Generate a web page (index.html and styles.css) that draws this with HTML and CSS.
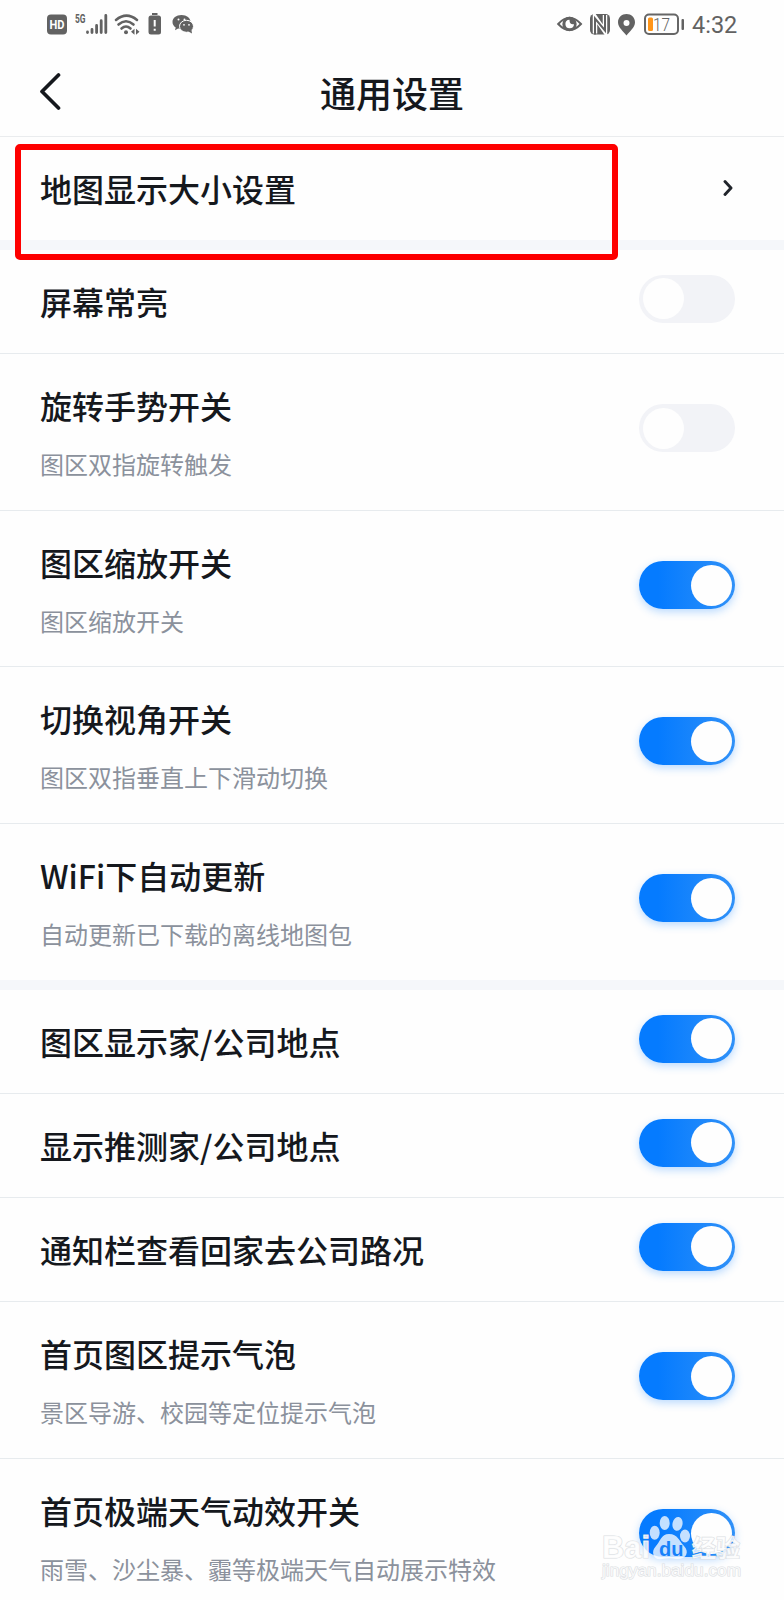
FILE: index.html
```html
<!DOCTYPE html>
<html lang="zh-CN">
<head>
<meta charset="utf-8">
<title>通用设置</title>
<link rel="stylesheet" href="styles.css">
</head>
<body>
<div class="screen">
  <div class="status">
    <svg class="status-icons" width="150" height="30" viewBox="0 0 150 30" fill="#626262">
      <rect x="0" y="5.500" width="20" height="20" rx="4"/>
      <text x="10" y="20" class="hd" textLength="15" lengthAdjust="spacingAndGlyphs">HD</text>
      <text x="28" y="14" class="fiveg" textLength="10.500" lengthAdjust="spacingAndGlyphs">5G</text>
      <g stroke="#626262" stroke-width="2.8" stroke-linecap="round">
        <path d="M40.500 23v.5M45 20.500v3M49.600 16.500v7M54.200 11.700v11.800M58.800 6.400v17.100"/>
      </g>
      <g fill="none" stroke="#626262" stroke-width="2.600" stroke-linecap="round">
        <path d="M69 10.900q10.500-8.600 21 0M71.500 15.500q7.500-6.500 15 0M74.500 19.500q4.500-4 9 0"/>
      </g>
      <circle cx="79" cy="23.200" r="2"/>
      <path d="M87.500 19.700v6l-3.500-3zM89 19.700v6l3.500-3z"/>
      <rect x="105" y="4" width="5.500" height="2"/>
      <rect x="101.500" y="6.500" width="12.500" height="19" rx="2.500"/>
      <path d="M107.700 11v6.500M107.700 19.800v2" stroke="#fff" stroke-width="2"/>
      <path d="M134.500 6c-5.200 0-9 3.100-9 7 0 2.300 1.200 4.200 3.200 5.500l-.7 2.700 3.100-1.600c1 .3 2 .4 3.400.4 5.200 0 9-3.100 9-7s-3.800-7-9-7z"/>
      <ellipse cx="139.500" cy="17.300" rx="7" ry="6" stroke="#fff" stroke-width="1"/>
      <path d="M141 22.200l4 2.300-.6-3.800z"/>
      <g fill="#fff"><circle cx="131.500" cy="10.500" r="1"/><circle cx="137.500" cy="10.500" r="1"/><circle cx="137" cy="15.800" r=".9"/><circle cx="142" cy="15.800" r=".9"/></g>
    </svg>
    <div class="status-right">
      <svg width="130" height="30" viewBox="0 0 130 30" fill="#626262">
        <path d="M2.200 15Q13.500 2.500 25 15Q13.500 27 2.200 15z" fill="none" stroke="#626262" stroke-width="2"/>
        <circle cx="13.500" cy="15" r="7.200"/>
        <path d="M13.500 10.700a4.300 4.300 0 1 0 4.500 4.500q-4.500.8-4.500-4.500z" fill="#fff"/>
        <rect x="34" y="5" width="20" height="20.500" rx="4.500"/>
        <path d="M39 24.500V8L49 22.500V6" fill="none" stroke="#fff" stroke-width="4.500"/>
        <path d="M39 25.500V9.500L49 21.500V5" fill="none" stroke="#626262" stroke-width="2"/>
        <path d="M70.500 5c-4.700 0-8.500 3.500-8.500 8.200 0 5.300 5.500 9.200 8.500 13.300 3-4.100 8.500-8 8.500-13.300 0-4.700-3.800-8.200-8.500-8.200zm0 6a3 3 0 1 1 0 6 3 3 0 0 1 0-6z"/>
        <rect x="89" y="5.500" width="33" height="19.500" rx="4" fill="none" stroke="#666" stroke-width="2"/>
        <rect x="92" y="8.500" width="5" height="13.500" rx="1.500" fill="#ff9518"/>
        <rect x="125.500" y="10" width="2.500" height="11" rx="1"/>
        <text x="97" y="21.500" class="battery" textLength="17" lengthAdjust="spacingAndGlyphs">17</text>
      </svg>
      <span class="clock">4:32</span>
    </div>
  </div>
  <div class="header">
    <svg class="back" width="22" height="38" viewBox="0 0 22 38"><path d="M19.500 3L3 19.500 19.500 36" fill="none" stroke="#15181d" stroke-width="3.700" stroke-linecap="round" stroke-linejoin="round"/></svg>
    <h1 class="heading">通用设置</h1>
  </div>
  <div class="row link band">
    <div class="title">地图显示大小设置</div>
    <svg class="chevron" width="10" height="18" viewBox="0 0 10 18"><path d="M2 2.500L8 9l-6 6.500" fill="none" stroke="#20242b" stroke-width="2.900" stroke-linecap="round" stroke-linejoin="round"/></svg>
    <div class="highlight"></div>
  </div>
  <div class="row"><div class="title">屏幕常亮</div><div class="toggle"></div></div>
  <div class="row tall"><div><div class="title">旋转手势开关</div><div class="sub">图区双指旋转触发</div></div><div class="toggle"></div></div>
  <div class="row tall zoom"><div><div class="title">图区缩放开关</div><div class="sub">图区缩放开关</div></div><div class="toggle on"></div></div>
  <div class="row tall"><div><div class="title">切换视角开关</div><div class="sub">图区双指垂直上下滑动切换</div></div><div class="toggle on"></div></div>
  <div class="row tall band"><div><div class="title">WiFi下自动更新</div><div class="sub">自动更新已下载的离线地图包</div></div><div class="toggle on"></div></div>
  <div class="row"><div class="title">图区显示家/公司地点</div><div class="toggle on"></div></div>
  <div class="row"><div class="title">显示推测家/公司地点</div><div class="toggle on"></div></div>
  <div class="row"><div class="title">通知栏查看回家去公司路况</div><div class="toggle on"></div></div>
  <div class="row tall"><div><div class="title">首页图区提示气泡</div><div class="sub">景区导游、校园等定位提示气泡</div></div><div class="toggle on"></div></div>
  <div class="row tall last"><div><div class="title">首页极端天气动效开关</div><div class="sub">雨雪、沙尘暴、霾等极端天气自动展示特效</div></div><div class="toggle on"></div></div>
  <svg class="watermark" width="150" height="74" viewBox="0 0 150 74">
    <g class="mark">
      <text x="0" y="43" textLength="48" lengthAdjust="spacingAndGlyphs" class="mark-latin">Bai</text>
      <text x="90" y="42" textLength="48" class="mark-cjk">经验</text>
      <text x="0" y="61" textLength="139" lengthAdjust="spacingAndGlyphs" class="mark-url">jingyan.baidu.com</text>
    </g>
    <g fill="#fff" fill-opacity=".76">
      <ellipse cx="52.700" cy="17.700" rx="5" ry="7"/><ellipse cx="62.700" cy="8" rx="5" ry="7"/><ellipse cx="75.500" cy="9" rx="5" ry="7" transform="rotate(12 76 9)"/><ellipse cx="83" cy="21" rx="5" ry="6.500"/>
      <path d="M67 19c-8 0-9 8-13 12-6 6-2 15 6 13 5-1 10-1 14 0 10 1 14-7 8-13-5-5-6-12-15-12z"/>
    </g>
    <text x="57" y="41" class="mark-du">du</text>
  </svg>
</div>
</body>
</html>
```
FILE: styles.css
```css
* { box-sizing: border-box; }
body { margin: 0; background: #fefefe; font-family: "Noto Sans CJK SC", sans-serif; color: #15181d; }
.screen { position: relative; width: 784px; height: 1600px; overflow: hidden; }
.status { display: flex; justify-content: space-between; height: 50px; padding: 9px 46px 0 47px; }
.status-right { display: flex; }
.hd { font: bold 13px Roboto, sans-serif; fill: #fff; text-anchor: middle; }
.fiveg { font: bold 12px Roboto, sans-serif; }
.battery { font: 300 18px Roboto, sans-serif; }
.clock { width: 46px; margin-left: 6px; font: 23.5px/33px Roboto, sans-serif; color: #626262; }
.header { position: relative; display: flex; align-items: center; justify-content: center; height: 87px; padding-bottom: 2px; border-bottom: 1px solid #eaecee; }
.back { position: absolute; left: 39px; top: 22px; }
.heading { margin: 0; font-size: 36px; line-height: 50px; font-weight: 500; }
.row { position: relative; display: flex; justify-content: space-between; align-items: flex-start; height: 104px; padding: 31px 49px 0 40px; border-bottom: 1px solid #e7ebee; }
.tall { height: 157px; }
.zoom { height: 156px; }
.band { height: 113px; border-bottom: 10px solid #f5f7fa; }
.tall.band { height: 166px; }
.last { border-bottom: 0; }
.title { font-size: 32px; line-height: 40px; font-weight: 500; white-space: nowrap; }
.sub { margin-top: 23px; font-size: 24px; line-height: 32px; color: #8b919c; white-space: nowrap; }
.chevron { margin: 11px 2px 0 0; }
.highlight { position: absolute; left: 15px; top: 6.5px; width: 603px; height: 116px; border: 6px solid #fe0000; border-radius: 5px; z-index: 1; }
.toggle { display: flex; width: 96px; height: 48px; padding: 3.5px; margin-top: -6.5px; border-radius: 24px; background: #f2f3f7; flex: none; }
.tall .toggle { margin-top: 19px; }
.toggle::before { content: ""; width: 41px; height: 41px; border-radius: 50%; background: #fefefe; }
.toggle.on { justify-content: flex-end; background: linear-gradient(90deg, #057bff 20%, #3091f8); box-shadow: 0 3px 9px rgba(30, 135, 255, .3); }
.watermark { position: absolute; left: 602px; top: 1515px; overflow: visible; }
.mark { fill: #fff; fill-opacity: .8; stroke: #dcdfe3; stroke-width: 1.2; paint-order: stroke; }
.mark-latin { font: bold 31px "Liberation Sans", sans-serif; }
.mark-cjk { font: bold 24px "Noto Sans CJK SC", sans-serif; }
.mark-url { font: 17px "Liberation Sans", sans-serif; }
.mark-du { font: bold 20px "Liberation Sans", sans-serif; fill: #1681fa; }
```
